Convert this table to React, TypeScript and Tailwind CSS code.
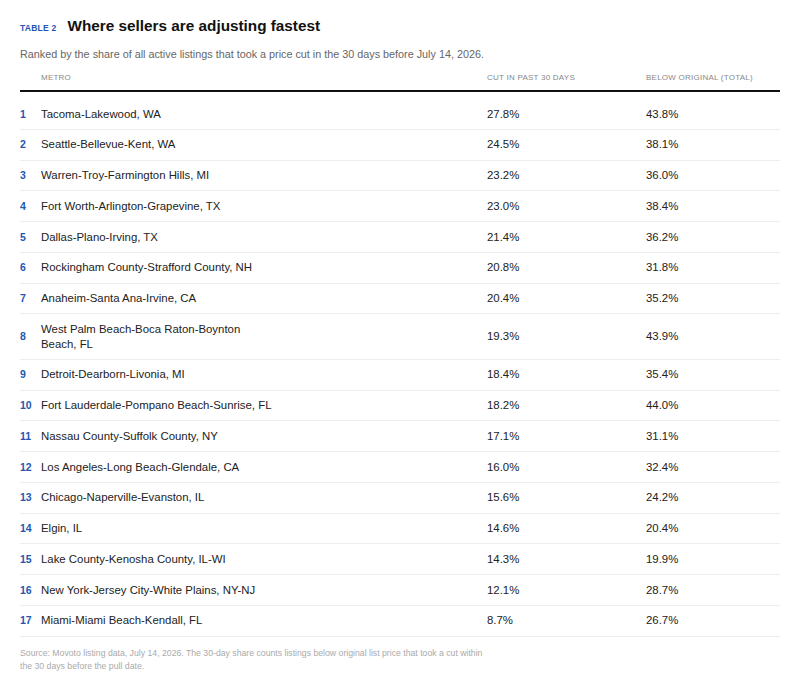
const rows: [string, string, string][] = [
  ["Tacoma-Lakewood, WA", "27.8%", "43.8%"],
  ["Seattle-Bellevue-Kent, WA", "24.5%", "38.1%"],
  ["Warren-Troy-Farmington Hills, MI", "23.2%", "36.0%"],
  ["Fort Worth-Arlington-Grapevine, TX", "23.0%", "38.4%"],
  ["Dallas-Plano-Irving, TX", "21.4%", "36.2%"],
  ["Rockingham County-Strafford County, NH", "20.8%", "31.8%"],
  ["Anaheim-Santa Ana-Irvine, CA", "20.4%", "35.2%"],
  ["West Palm Beach-Boca Raton-Boynton Beach, FL", "19.3%", "43.9%"],
  ["Detroit-Dearborn-Livonia, MI", "18.4%", "35.4%"],
  ["Fort Lauderdale-Pompano Beach-Sunrise, FL", "18.2%", "44.0%"],
  ["Nassau County-Suffolk County, NY", "17.1%", "31.1%"],
  ["Los Angeles-Long Beach-Glendale, CA", "16.0%", "32.4%"],
  ["Chicago-Naperville-Evanston, IL", "15.6%", "24.2%"],
  ["Elgin, IL", "14.6%", "20.4%"],
  ["Lake County-Kenosha County, IL-WI", "14.3%", "19.9%"],
  ["New York-Jersey City-White Plains, NY-NJ", "12.1%", "28.7%"],
  ["Miami-Miami Beach-Kendall, FL", "8.7%", "26.7%"],
];

export default function App() {
  return (
    <div className="bg-white px-5 pt-[16px] pb-4 font-['Liberation_Sans',Arial,sans-serif] text-[#222]">
      <div className="flex items-baseline gap-[11px]">
        <span className="text-[8.5px] font-bold leading-[20px] tracking-[0.03em] text-[#2456b0]">TABLE 2</span>
        <h2 className="text-[15.3px] font-bold leading-[20px] text-[#111]">Where sellers are adjusting fastest</h2>
      </div>
      <p className="mt-[8px] text-[10.8px] leading-[16px] text-[#666]">
        Ranked by the share of all active listings that took a price cut in the 30 days before July 14, 2026.
      </p>

      <table className="mt-[10px] w-full border-collapse">
        <thead>
          <tr className="border-b-2 border-[#111] text-left text-[8px] uppercase leading-[12px] tracking-[0.03em] text-[#888]">
            <th className="w-[21px] pb-[6px] font-normal"></th>
            <th className="pb-[6px] font-normal">Metro</th>
            <th className="w-[159px] pb-[6px] font-normal">Cut in past 30 days</th>
            <th className="w-[134px] pb-[6px] font-normal">Below original (total)</th>
          </tr>
        </thead>
        <tbody>
          <tr className="h-[8px]">
            <td colSpan={4}></td>
          </tr>
          {rows.map(([metro, cut, below], i) => (
            <tr key={metro} className="border-b border-[#eeeeee] text-[11.4px] leading-[14.75px]">
              <td className="py-[7.5px] align-middle text-[10.5px] font-bold text-[#2456b0]">{i + 1}</td>
              <td className="py-[7.5px] align-middle">
                <div className="max-w-[232px]">{metro}</div>
              </td>
              <td className="py-[7.5px] align-middle">{cut}</td>
              <td className="py-[7.5px] align-middle">{below}</td>
            </tr>
          ))}
        </tbody>
      </table>

      <p className="mt-[10px] max-w-[475px] text-[8.7px] leading-[13px] text-[#aaa]">
        Source: Movoto listing data, July 14, 2026. The 30-day share counts listings below original list price that took a cut within the 30 days before the pull date.
      </p>
    </div>
  );
}
